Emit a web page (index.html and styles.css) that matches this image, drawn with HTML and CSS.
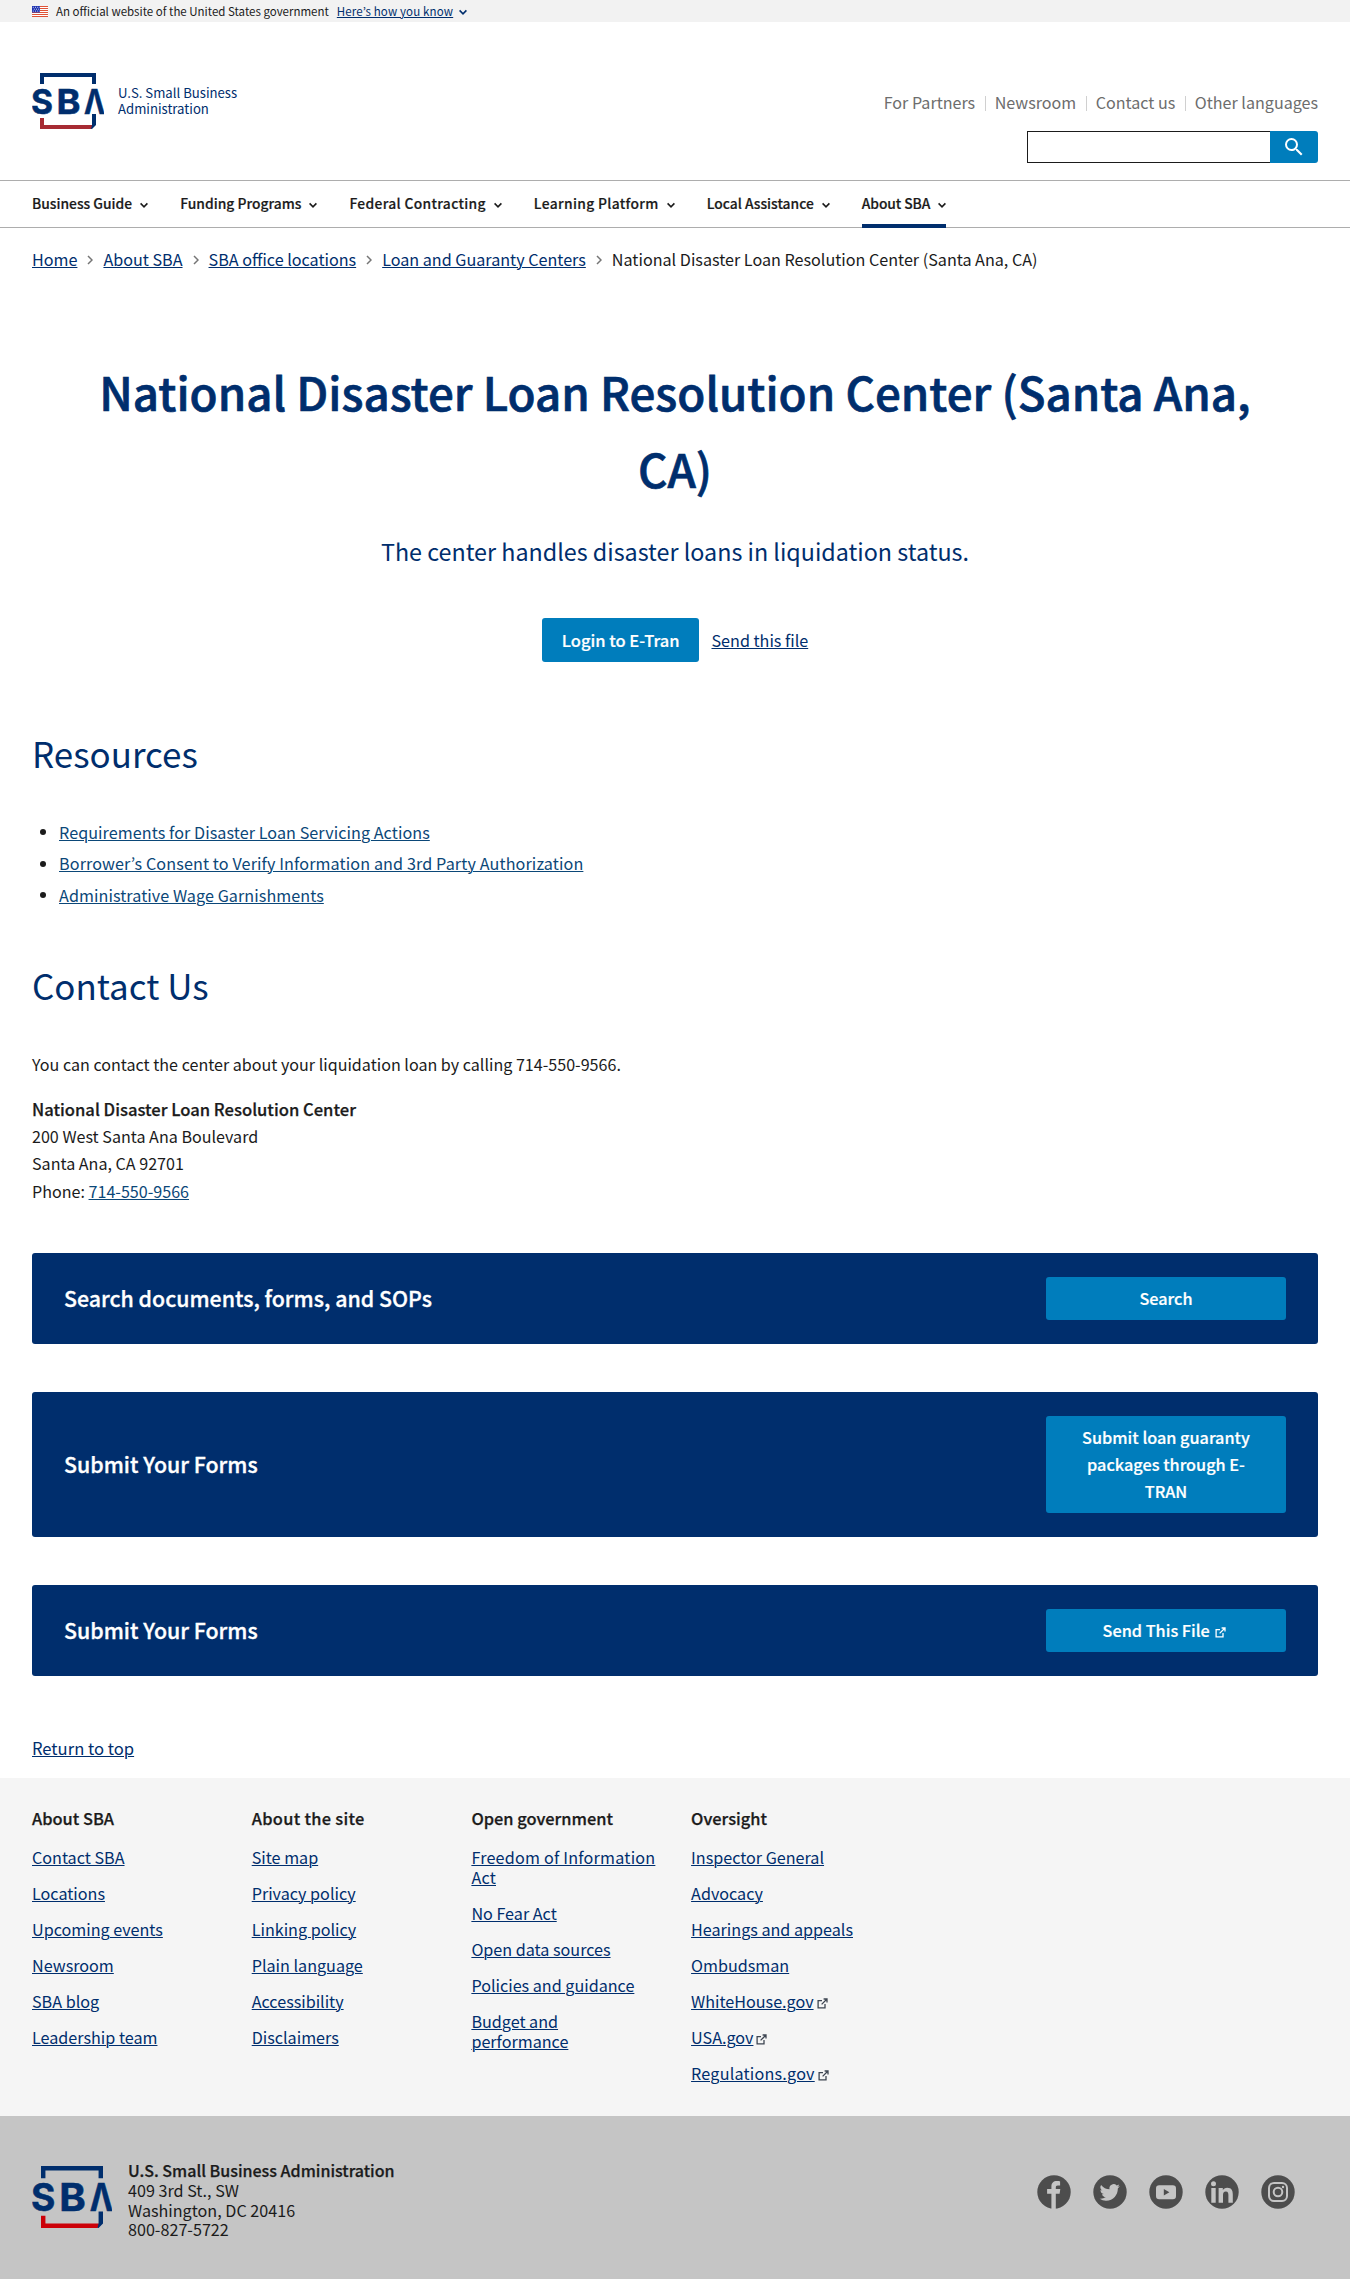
FILE: index.html
```
<!DOCTYPE html>
<html lang="en">
<head>
<meta charset="utf-8">
<title>National Disaster Loan Resolution Center (Santa Ana, CA)</title>
<link rel="stylesheet" href="styles.css">
</head>
<body>
<svg class="sprite" aria-hidden="true">
  <symbol id="down" viewBox="0 0 8 8"><path d="M.6 2.4 4 5.8 7.4 2.4" fill="none" stroke="currentColor" stroke-width="1.6"/></symbol>
  <symbol id="right" viewBox="0 0 6 10"><path d="M1 1 5 5 1 9" fill="none" stroke="currentColor" stroke-width="1.5"/></symbol>
  <symbol id="ext" viewBox="0 0 11 11"><path d="M5 2.7H1.1V9.9H8V6M6.6 1H10V4.4M10 1 4.6 6.4" fill="none" stroke="currentColor" stroke-width="1.3"/></symbol>
  <symbol id="sba" viewBox="0 0 72 56">
    <path d="M10 11V2H62V11" fill="none" stroke="#002e6d" stroke-width="4"/>
    <path d="M8 45h4v7h50l-3 4H8z" fill="var(--logo-red)"/>
    <path d="M60 41h4v11l-4 4h-1l1-4z" fill="#002e6d"/>
    <g fill="#002e6d" stroke="#002e6d" stroke-width=".5" font-family="Inter, sans-serif" font-weight="700" font-size="34.5">
      <text x="-1" y="40.7" textLength="22" lengthAdjust="spacingAndGlyphs">S</text>
      <text x="24.5" y="40.7" textLength="24" lengthAdjust="spacingAndGlyphs">B</text>
      <text x="52" y="40.7" textLength="21" lengthAdjust="spacingAndGlyphs">Λ</text>
    </g>
  </symbol>
</svg>

<div class="banner">
  <svg class="banner__flag" viewBox="0 0 16 11">
    <path fill="#fff" d="M0 0h16v11H0z"/>
    <path stroke="#db3e1f" stroke-width=".9" d="M0 .5h16M0 2.5h16M0 4.5h16M0 6.5h16M0 8.5h16M0 10.5h16"/>
    <path fill="#1e33b1" d="M0 0h8v6.5H0z"/>
    <path stroke="#fff" stroke-width=".8" stroke-dasharray="1 1.2" d="M.8 1.3H8M1.8 3.2H8M.8 5.1H8"/>
  </svg>
  <span>An official website of the United States government</span>
  <a class="banner__more" href="#">Here’s how you know</a>
  <svg class="chev banner__chev"><use href="#down"/></svg>
</div>

<header class="header">
  <a class="brand" href="#">
    <svg class="brand__logo"><use href="#sba"/></svg>
    <span>U.S. Small Business<br>Administration</span>
  </a>
  <div class="header__side">
    <ul class="toplinks"><li>For Partners</li><li>Newsroom</li><li>Contact us</li><li>Other languages</li></ul>
    <form class="search">
      <input class="search__input" type="text" aria-label="Search">
      <button class="search__btn" type="button" aria-label="Search">
        <svg viewBox="0 0 24 24"><path fill="#fff" d="M15.5 14h-.79l-.28-.27A6.47 6.47 0 0 0 16 9.5 6.5 6.5 0 1 0 9.5 16c1.61 0 3.09-.59 4.23-1.57l.27.28v.79l5 4.99L20.49 19l-4.99-5zm-6 0a4.5 4.5 0 1 1 0-9 4.5 4.5 0 0 1 0 9z"/></svg>
      </button>
    </form>
  </div>
</header>

<nav class="nav">
  <a class="nav__item" href="#">Business Guide<svg class="chev"><use href="#down"/></svg></a>
  <a class="nav__item" href="#">Funding Programs<svg class="chev"><use href="#down"/></svg></a>
  <a class="nav__item nav__item--wide" href="#">Federal Contracting<svg class="chev"><use href="#down"/></svg></a>
  <a class="nav__item nav__item--wide" href="#">Learning Platform<svg class="chev"><use href="#down"/></svg></a>
  <a class="nav__item" href="#">Local Assistance<svg class="chev"><use href="#down"/></svg></a>
  <a class="nav__item nav__item--current" href="#">About SBA<svg class="chev"><use href="#down"/></svg></a>
</nav>

<main class="main">
  <div class="crumbs">
    <a href="#">Home</a><svg><use href="#right"/></svg>
    <a href="#">About SBA</a><svg><use href="#right"/></svg>
    <a href="#">SBA office locations</a><svg><use href="#right"/></svg>
    <a href="#">Loan and Guaranty Centers</a><svg><use href="#right"/></svg>
    <span>National Disaster Loan Resolution Center (Santa Ana, CA)</span>
  </div>

  <section class="hero">
    <h1>National Disaster Loan Resolution Center (Santa Ana, CA)</h1>
    <p class="hero__lead">The center handles disaster loans in liquidation status.</p>
    <div class="hero__actions">
      <a class="btn" href="#">Login to E-Tran</a>
      <a href="#">Send this file</a>
    </div>
  </section>

  <h2>Resources</h2>
  <ul class="resources">
    <li><a href="#">Requirements for Disaster Loan Servicing Actions</a></li>
    <li><a class="spaced" href="#">Borrower’s Consent to Verify Information and 3rd Party Authorization</a></li>
    <li><a href="#">Administrative Wage Garnishments</a></li>
  </ul>

  <h2 class="contact-title">Contact Us</h2>
  <div class="contact">
    <p>You can contact the center about your liquidation loan by calling 714-550-9566.</p>
    <p><strong>National Disaster Loan Resolution Center</strong><br>200 West Santa Ana Boulevard<br>Santa Ana, CA 92701<br>Phone: <a href="#">714-550-9566</a></p>
  </div>

  <div class="ctas">
    <div class="cta"><h3>Search documents, forms, and SOPs</h3><a class="cta__btn" href="#">Search</a></div>
    <div class="cta"><h3>Submit Your Forms</h3><a class="cta__btn" href="#">Submit loan guaranty packages through E-TRAN</a></div>
    <div class="cta"><h3>Submit Your Forms</h3><a class="cta__btn" href="#">Send This File <svg class="ext"><use href="#ext"/></svg></a></div>
  </div>

  <a class="return" href="#">Return to top</a>
</main>

<footer>
  <div class="sitemap">
    <div class="sitemap__col"><h4>About SBA</h4>
      <ul><li><a href="#">Contact SBA</a></li><li><a href="#">Locations</a></li><li><a href="#">Upcoming events</a></li><li><a href="#">Newsroom</a></li><li><a href="#">SBA blog</a></li><li><a href="#">Leadership team</a></li></ul></div>
    <div class="sitemap__col"><h4 class="spaced">About the site</h4>
      <ul><li><a href="#">Site map</a></li><li><a href="#">Privacy policy</a></li><li><a href="#">Linking policy</a></li><li><a href="#">Plain language</a></li><li><a href="#">Accessibility</a></li><li><a href="#">Disclaimers</a></li></ul></div>
    <div class="sitemap__col"><h4>Open government</h4>
      <ul><li><a class="spaced" href="#">Freedom of Information<br>Act</a></li><li><a href="#">No Fear Act</a></li><li><a href="#">Open data sources</a></li><li><a href="#">Policies and guidance</a></li><li><a href="#">Budget and<br>performance</a></li></ul></div>
    <div class="sitemap__col"><h4>Oversight</h4>
      <ul><li><a href="#">Inspector General</a></li><li><a href="#">Advocacy</a></li><li><a href="#">Hearings and appeals</a></li><li><a href="#">Ombudsman</a></li><li><a href="#">WhiteHouse.gov</a><svg class="ext"><use href="#ext"/></svg></li><li><a href="#">USA.gov</a><svg class="ext"><use href="#ext"/></svg></li><li><a class="spaced" href="#">Regulations.gov</a><svg class="ext"><use href="#ext"/></svg></li></ul></div>
  </div>
  <div class="base">
    <svg class="base__logo"><use href="#sba"/></svg>
    <address><strong>U.S. Small Business Administration</strong><br>409 3rd St., SW<br>Washington, DC 20416<br>800-827-5722</address>
    <div class="social">
      <svg viewBox="0 0 34 34"><circle cx="17" cy="17" r="16.7"/><path class="cut" d="M14.4 34V18.8h-4.3v-4.7h4.3v-2.6c0-3.5 2.1-5.4 5.4-5.4 1.5 0 2.9.2 3.3.3v4h-2.2c-1.7 0-2.1.9-2.1 2v1.7h4.5l-.7 4.7h-3.8V34z"/></svg>
      <svg viewBox="0 0 34 34"><circle cx="17" cy="17" r="16.7"/><path class="cut" transform="translate(7 7) scale(.84)" d="M23.6 4.9a9.7 9.7 0 0 1-2.8.8 4.9 4.9 0 0 0 2.1-2.7 9.9 9.9 0 0 1-3.1 1.2 4.9 4.9 0 0 0-8.4 4.5A13.9 13.9 0 0 1 1.3 3.5a4.9 4.9 0 0 0 1.5 6.6 4.9 4.9 0 0 1-2.2-.6v.1a4.9 4.9 0 0 0 3.9 4.8 5 5 0 0 1-2.2.1 4.9 4.9 0 0 0 4.6 3.4A9.9 9.9 0 0 1-.4 20a13.9 13.9 0 0 0 7.6 2.2c9 0 14-7.5 14-14v-.6a10 10 0 0 0 2.4-2.7z"/></svg>
      <svg viewBox="0 0 34 34"><circle cx="17" cy="17" r="16.7"/><rect class="cut" x="7" y="10.3" width="20" height="14" rx="3.2"/><path d="m14.8 14 5.6 3.2-5.6 3.2z"/></svg>
      <svg viewBox="0 0 34 34"><circle cx="17" cy="17" r="16.7"/><path class="cut" d="M6.3 13h4.4v14.7H6.3zM8.5 6.2a2.5 2.5 0 1 1 0 5 2.5 2.5 0 0 1 0-5zM13.6 13h4.2v2c.8-1.3 2.3-2.3 4.4-2.3 4.5 0 5.6 2.8 5.6 6.9v8.1h-4.4v-7.3c0-2-.2-3.9-2.5-3.9s-2.9 1.7-2.9 3.8v7.4h-4.4z"/></svg>
      <svg viewBox="0 0 34 34"><circle cx="17" cy="17" r="16.7"/><g class="line"><rect x="8" y="8" width="18" height="18" rx="5"/><circle cx="17" cy="17" r="4.3"/></g><circle class="cut" cx="22" cy="12" r="1.2"/></svg>
    </div>
  </div>
</footer>
</body>
</html>
```

FILE: styles.css
```
* { box-sizing: border-box; }

body {
  margin: 0;
  background: #fff;
  color: #1b1b1b;
  font: 16.15px/20px "Noto Sans CJK KR", "Noto Sans", sans-serif;
  --logo-red: #a72b33;
}

a { color: #002e6d; text-underline-offset: 1px; text-decoration-thickness: 1px; }
ul { list-style: none; margin: 0; padding: 0; }
h1, h2, h3, h4, p { margin: 0; font-weight: 500; }
strong { font-weight: 500; -webkit-text-stroke: .25px; }

.sprite { display: none; }
.chev { width: 8px; height: 8px; }
.ext { width: 11px; height: 11px; }

/* Government banner */
.banner {
  display: flex;
  align-items: center;
  height: 22px;
  padding: 0 32px;
  background: #f2f2f2;
  font-size: 11.5px;
}
.banner__flag { width: 16px; height: 11px; margin-right: 8px; }
.banner__more { margin-left: 8px; letter-spacing: .15px; }
.banner__chev { margin: 1px 0 0 6px; color: #002e6d; }

/* Header */
.header {
  display: flex;
  justify-content: space-between;
  align-items: flex-start;
  height: 158px;
  padding: 0 32px;
}
.brand {
  display: flex;
  gap: 14px;
  margin-top: 51px;
  color: #002e6d;
  font-size: 13.15px;
  line-height: 16.3px;
  text-decoration: none;
}
.brand__logo { width: 72px; height: 56px; overflow: visible; }
.brand span { padding-top: 12px; }
.header__side {
  display: flex;
  flex-direction: column;
  align-items: flex-end;
  padding-top: 70px;
}
.toplinks { display: flex; color: #6d6d6d; font-size: 16.1px; }
.toplinks li + li { display: flex; align-items: center; }
.toplinks li + li::before {
  content: "";
  width: 1px;
  height: 15px;
  margin: 3px 8.5px 0 10px;
  background: #d0d0d0;
}
.search { display: flex; width: 291px; height: 32px; margin-top: 19px; }
.search__input {
  width: 243px;
  border: 1px solid #1b1b1b;
  border-right: 0;
  border-radius: 0;
}
.search__btn {
  width: 48px;
  padding: 0;
  border: 0;
  border-radius: 0 3px 3px 0;
  background: #007dbc;
}
.search__btn svg { display: block; width: 24px; height: 24px; margin: -1px auto 0; }

/* Primary navigation */
.nav {
  display: flex;
  gap: 32px;
  height: 48px;
  padding: 0 32px;
  border: solid #adadad;
  border-width: 1px 0;
  font-size: 13.85px;
  font-weight: 500;
}
.nav__item {
  display: flex;
  align-items: center;
  gap: 8px;
  height: 47px;
  padding-bottom: 3px;
  color: #1b1b1b;
  text-decoration: none;
  -webkit-text-stroke: .2px;
}
.nav__item .chev { margin-top: 3px; }
.nav__item--wide { letter-spacing: .32px; }
.nav__item--current { letter-spacing: -.1px; box-shadow: inset 0 -4px #002e6d; }

/* Breadcrumbs */
.main { padding: 0 32px; }
.crumbs { display: flex; align-items: center; padding-top: 21px; }
.crumbs svg { width: 6px; height: 10px; margin: 2px 10px 0; color: #757575; }

/* Hero */
.hero { padding: 84px 64px 0; text-align: center; color: #002e6d; }
h1 {
  font-size: 45.7px;
  line-height: 76.6px;
  -webkit-text-stroke: .7px;
}
.hero__lead { margin-top: 25px; font-size: 23.3px; font-weight: 400; line-height: 40px; }
.hero__actions {
  display: flex;
  justify-content: center;
  align-items: center;
  gap: 12px;
  margin-top: 46.4px;
}
.btn {
  padding: 12px 20px;
  border-radius: 3px;
  background: #007dbc;
  color: #fff;
  font-size: 16.5px;
  font-weight: 500;
  text-decoration: none;
  -webkit-text-stroke: .2px;
}

/* Content */
h2 {
  margin-top: 66px;
  color: #002e6d;
  font-size: 34.95px;
  font-weight: 400;
  line-height: 50px;
}
.resources { margin-top: 39px; line-height: 31.5px; letter-spacing: .07px; }
.resources .spaced { letter-spacing: .12px; }
.resources li { display: flex; align-items: center; }
.resources li::before {
  content: "";
  width: 6px;
  height: 6px;
  margin: 0 13px 0 8px;
  border-radius: 50%;
  background: #1b1b1b;
}
.resources a, .contact a { color: #0b4778; }
.contact-title { margin-top: 49px; }
.contact { margin-top: 41px; font-size: 16.1px; line-height: 27.3px; }
.contact p { font-weight: 400; }
.contact p + p { margin-top: 17.5px; }
.contact strong { font-size: 16.6px; }

/* Call-to-action cards */
.ctas { display: flex; flex-direction: column; gap: 48px; margin-top: 48px; }
.cta {
  display: flex;
  justify-content: space-between;
  align-items: center;
  padding: 24px 32px;
  border-radius: 3px;
  background: #002e6d;
}
.cta h3 { padding-bottom: 2px; color: #fff; font-size: 21.35px; -webkit-text-stroke: .3px; }
.cta__btn {
  width: 240px;
  padding: 8px 30px;
  border-radius: 3px;
  background: #007dbc;
  color: #fff;
  font-size: 16.25px;
  font-weight: 500;
  line-height: 27px;
  text-align: center;
  text-decoration: none;
  -webkit-text-stroke: .2px;
}
.cta__btn .ext { margin: 0 3px -1px 2px; }
.return { display: inline-block; margin: 61.5px 0 20.5px; font-size: 16.6px; }

/* Footer */
.sitemap {
  display: flex;
  height: 338px;
  padding: 30px 32px 0;
  background: #f5f5f5;
}
.sitemap__col { width: 219.7px; }
.sitemap h4 { font-size: 16.4px; -webkit-text-stroke: .25px; }
.sitemap h4.spaced { letter-spacing: .3px; }
.sitemap ul { display: flex; flex-direction: column; gap: 16px; margin-top: 19px; }
.sitemap .ext { margin: 0 0 -1px 3px; color: #3d4551; }
.sitemap a.spaced { letter-spacing: .22px; }
.base {
  display: flex;
  height: 163px;
  padding: 45px 55px 0 32px;
  background: #c5c5c5;
  --logo-red: #cc0008;
}
.base__logo { width: 80px; height: 62px; margin: 5px 16px 0 0; overflow: visible; }
address { font-style: normal; line-height: 19.8px; }
address strong { font-size: 16.05px; }
.social { display: flex; gap: 22px; margin: 14px 0 0 auto; }
.social svg { width: 34px; height: 34px; fill: #4d4d4d; }
.social .cut { fill: #c5c5c5; }
.social .line { fill: none; stroke: #c5c5c5; stroke-width: 2; }
```
